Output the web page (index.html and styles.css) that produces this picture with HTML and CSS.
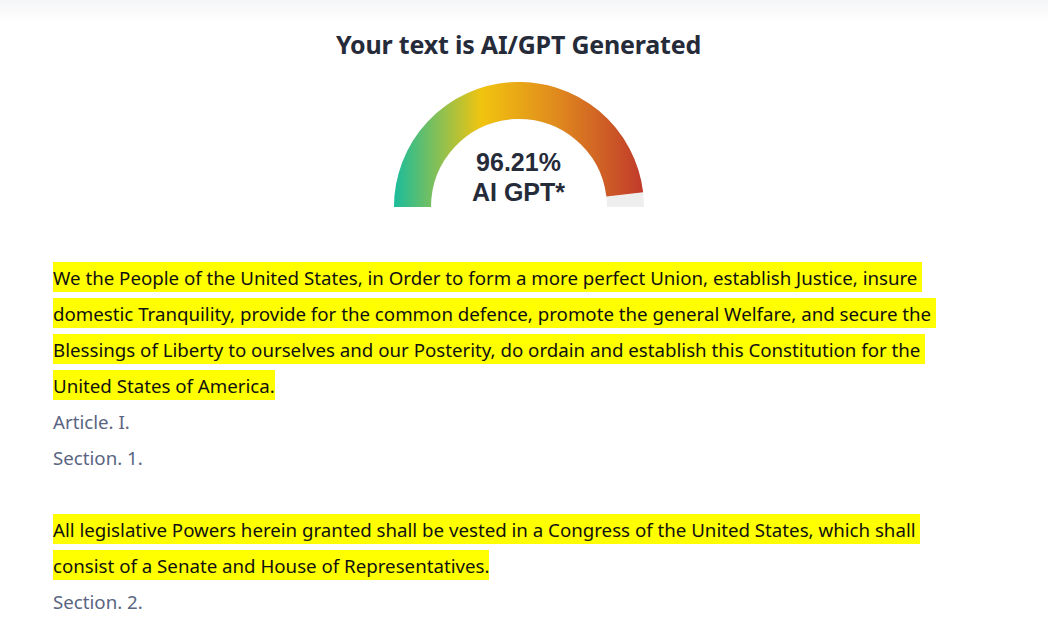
FILE: index.html
```html
<!DOCTYPE html>
<html>
<head>
<meta charset="utf-8">
<link rel="stylesheet" href="styles.css">
</head>
<body>
<div class="page">
  <h1 class="title">Your text is AI/GPT Generated</h1>
  <div class="gauge">
    <svg class="gauge-svg" width="250" height="125" viewBox="0 0 250 125">
      <defs>
        <linearGradient id="g" gradientUnits="userSpaceOnUse" x1="0" y1="0" x2="250" y2="0">
          <stop offset="0" stop-color="#1abc9c"/>
          <stop offset="0.35" stop-color="#f1c40f"/>
          <stop offset="0.65" stop-color="#e08a1e"/>
          <stop offset="1" stop-color="#c0392b"/>
        </linearGradient>
      </defs>
      <path d="M 18.5 125 A 106.5 106.5 0 0 1 231.5 125" fill="none" stroke="#eeeeee" stroke-width="37"/>
      <path d="M 18.5 125 A 106.5 106.5 0 0 1 230.75 112.35" fill="none" stroke="url(#g)" stroke-width="37"/>
    </svg>
    <div class="gauge-label">
      <div class="gauge-line">96.21%</div>
      <div class="gauge-line">AI GPT*</div>
    </div>
  </div>
  <div class="result">
    <div class="line"><span class="hl">We the People of the United States, in Order to form a more perfect Union, establish Justice, insure </span></div>
    <div class="line"><span class="hl">domestic Tranquility, provide for the common defence, promote the general Welfare, and secure the </span></div>
    <div class="line"><span class="hl">Blessings of Liberty to ourselves and our Posterity, do ordain and establish this Constitution for the </span></div>
    <div class="line"><span class="hl">United States of America.</span></div>
    <div class="line plain">Article. I.</div>
    <div class="line plain">Section. 1.</div>
    <div class="line blank"></div>
    <div class="line"><span class="hl">All legislative Powers herein granted shall be vested in a Congress of the United States, which shall </span></div>
    <div class="line"><span class="hl">consist of a Senate and House of Representatives.</span></div>
    <div class="line plain">Section. 2.</div>
  </div>
</div>
</body>
</html>
```
FILE: styles.css
```css
html, body {
  margin: 0;
  padding: 0;
}
body {
  font-family: "Noto Sans", "Open Sans", sans-serif;
  color: #212b36;
  background: #ffffff linear-gradient(to bottom, #f4f5f7, #ffffff 22px) no-repeat;
  background-size: 100% 22px;
}
.page {
  width: 1037px;
  height: 627px;
  overflow: hidden;
}
.title {
  margin: 0;
  padding-top: 27px;
  text-align: center;
  font-size: 25px;
  line-height: 34px;
  font-weight: 700;
  color: #262b3a;
  letter-spacing: -0.2px;
}
.gauge {
  position: relative;
  width: 250px;
  height: 125px;
  margin: 21px auto 0;
}
.gauge-svg {
  display: block;
}
.gauge-label {
  position: absolute;
  left: 0;
  right: 0;
  top: 65px;
  text-align: center;
  font-family: "Liberation Sans", Arial, sans-serif;
  font-size: 25px;
  font-weight: 700;
  color: #262b3a;
}
.gauge-line {
  line-height: 30px;
  height: 30px;
}
.result {
  padding: 53px 0 0 53px;
  font-size: 18.7px;
}
.line {
  height: 36px;
  line-height: 36px;
  white-space: pre;
  color: #111111;
}
.hl {
  background: #ffff00;
  padding: 3px 0 2px;
}
.plain {
  color: #5a6582;
}
```
